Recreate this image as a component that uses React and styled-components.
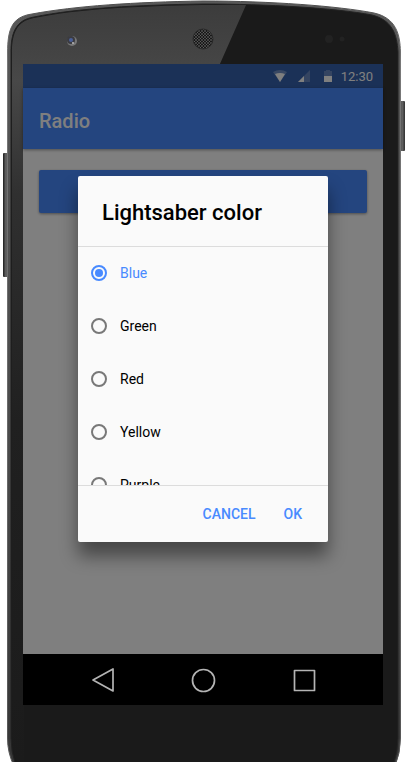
import React, { useState } from 'react';
import styled, { createGlobalStyle } from 'styled-components';

const GlobalStyle = createGlobalStyle`
  * { box-sizing: border-box; }
  body {
    margin: 0;
    background: #ffffff;
    font-family: Roboto, "Noto Sans", sans-serif;
  }
`;

const Phone = styled.div`
  position: relative;
  isolation: isolate;
  display: flex;
  flex-direction: column;
  min-height: 100vh;
  padding: 64px 23px 57px;
  overflow: hidden;
`;

const ShellDrawing = styled.svg`
  position: absolute;
  inset: 0;
  z-index: -1;
  width: 100%;
  height: 100%;
`;

const Screen = styled.div`
  position: relative;
  flex: 1;
  display: flex;
  flex-direction: column;
  background: #ffffff;
`;

const StatusBar = styled.div`
  display: flex;
  align-items: center;
  justify-content: flex-end;
  gap: 10px;
  height: 24px;
  padding-right: 10px;
  background: #3662ae;
  color: #ffffff;
`;

const StatusIcon = styled.svg`
  width: 14px;
  height: 14px;
  fill: #ffffff;
`;

const Clock = styled.time`
  margin-left: -4px;
  padding-top: 1px;
  font-size: 13px;
  line-height: 24px;
`;

const Toolbar = styled.header`
  display: flex;
  align-items: center;
  height: 61px;
  padding: 4px 16px 0;
  background: #488aff;
  box-shadow: 0 1px 3px rgba(0, 0, 0, 0.4);
`;

const PageTitle = styled.h1`
  margin: 0;
  font-size: 20px;
  font-weight: 500;
  line-height: 24px;
  color: #ffffff;
`;

const Content = styled.main`
  flex: 1;
  padding: 21px 16px;
`;

const OpenButton = styled.button`
  display: block;
  width: 100%;
  height: 43px;
  border: 0;
  border-radius: 2px;
  background: #488aff;
  box-shadow: 0 1px 3px rgba(0, 0, 0, 0.4);
`;

const Scrim = styled.div`
  position: absolute;
  inset: 0;
  display: flex;
  align-items: center;
  justify-content: center;
  background: rgba(0, 0, 0, 0.5);
`;

const Dialog = styled.form`
  display: flex;
  flex-direction: column;
  width: 250px;
  max-width: 100%;
  border-radius: 2px;
  background: #fafafa;
  box-shadow: 0 14px 18px rgba(0, 0, 0, 0.45);
`;

const DialogTitle = styled.h2`
  margin: 0;
  padding: 23px 24px 19px;
  font-size: 22px;
  font-weight: 500;
  line-height: 28px;
  color: #000000;
`;

const Options = styled.div`
  height: 240px;
  overflow: hidden;
  border-top: 1px solid #dcdcdc;
  border-bottom: 1px solid #dcdcdc;
`;

const Option = styled.label`
  display: flex;
  align-items: center;
  gap: 13px;
  height: 53px;
  padding: 0 13px 1px;
  font-size: 14px;
  line-height: 20px;
  color: ${({ $selected }) => ($selected ? '#488aff' : '#000000')};
`;

const Radio = styled.input`
  appearance: none;
  display: grid;
  place-items: center;
  flex: none;
  width: 16px;
  height: 16px;
  margin: 0;
  border: 2px solid #787878;
  border-radius: 50%;

  &:checked {
    border-color: #488aff;
  }

  &:checked::before {
    content: "";
    width: 8px;
    height: 8px;
    border-radius: 50%;
    background: #488aff;
  }
`;

const Actions = styled.div`
  display: flex;
  justify-content: flex-end;
  gap: 8px;
  padding: 10px 16px;
`;

const ActionButton = styled.button`
  height: 36px;
  padding: 0 10px;
  border: 0;
  background: transparent;
  font-family: inherit;
  font-size: 14px;
  font-weight: 500;
  line-height: 36px;
  color: #488aff;
`;

const NavBar = styled.nav`
  display: flex;
  align-items: center;
  justify-content: center;
  gap: 73px;
  height: 51px;
  background: #000000;
`;

const NavButton = styled.button`
  width: 28px;
  height: 28px;
  padding: 0;
  border: 0;
  background: transparent;

  svg {
    display: block;
    fill: none;
    stroke: #b4b4b4;
    stroke-width: 1.7;
    stroke-linejoin: round;
  }
`;

const BODY =
  'M7.500 52 C8 32 10 17 32 14 C75 6 135 2 203 1 C270 1 338 6 374 13 C396 18 400 34 400.500 52 L400.500 738 Q400.500 753 395 766 L14 766 Q7.500 753 7.500 738 Z';
const FACE =
  'M11 52 C11 34 15 20 34 17 C78 8 138 5 203 4 C268 4 335 8 372 15 C392 20 397 34 398 52 L398 738 Q398 752 393 766 L16 766 Q11 752 11 738 Z';

function Shell() {
  return (
    <ShellDrawing viewBox="0 0 406 762" preserveAspectRatio="none" aria-hidden="true">
      <defs>
        <linearGradient id="gloss" x1="0" y1="0" x2="0" y2="1">
          <stop offset="0" stopColor="#3c3c3c" />
          <stop offset="0.1" stopColor="#484848" />
          <stop offset="0.25" stopColor="#303030" />
          <stop offset="0.55" stopColor="#202020" />
          <stop offset="1" stopColor="#1b1b1b" />
        </linearGradient>
        <linearGradient id="key" x1="0" y1="0" x2="1" y2="0">
          <stop offset="0" stopColor="#1c1c1c" />
          <stop offset="0.5" stopColor="#686868" />
          <stop offset="1" stopColor="#303030" />
        </linearGradient>
        <linearGradient id="rim" x1="0" y1="0" x2="0" y2="1">
          <stop offset="0" stopColor="#585858" />
          <stop offset="0.6" stopColor="#4a4a4a" />
          <stop offset="1" stopColor="#363636" />
        </linearGradient>
        <linearGradient id="rimEdge" x1="0" y1="0" x2="0" y2="1">
          <stop offset="0" stopColor="#4c4c4c" />
          <stop offset="0.08" stopColor="#787878" />
          <stop offset="0.6" stopColor="#686868" />
          <stop offset="1" stopColor="#555555" />
        </linearGradient>
        <pattern id="mesh" width="3" height="3" patternUnits="userSpaceOnUse">
          <rect width="3" height="3" fill="#171717" />
          <circle cx="1" cy="1" r="0.8" fill="#777777" />
          <circle cx="2.5" cy="2.5" r="0.6" fill="#666666" />
        </pattern>
      </defs>
      <rect x="3" y="153" width="6" height="124" rx="1" fill="url(#key)" />
      <rect x="399" y="101" width="6" height="50" rx="1" fill="url(#key)" />
      <path d={BODY} fill="url(#rim)" stroke="url(#rimEdge)" />
      <path d={FACE} fill="#1a1a1a" stroke="#222222" />
      <path
        d="M12 52 C12 35 16 21 34 18 C78 9 138 6 203 5 L246 5 L219 66 L24 66 L24 762 L17 762 Q12 750 12 738 Z"
        fill="url(#gloss)"
      />
      <circle cx="72" cy="41" r="5" fill="#777777" />
      <circle cx="71" cy="40" r="4" fill="#3b3b40" />
      <circle cx="71" cy="40" r="2" fill="#4a5f98" />
      <circle cx="73" cy="43" r="1" fill="#bbbbbb" />
      <circle cx="203" cy="39" r="10" fill="url(#mesh)" stroke="#2a2a2a" />
      <circle cx="329" cy="39" r="4" fill="#222222" />
      <circle cx="342" cy="39" r="2.5" fill="#222222" />
    </ShellDrawing>
  );
}

const colors = ['Blue', 'Green', 'Red', 'Yellow', 'Purple'];

export default function App() {
  const [selected, setSelected] = useState('Blue');

  return (
    <>
      <GlobalStyle />
      <Phone>
        <Shell />
        <Screen>
          <StatusBar>
            <StatusIcon viewBox="0 0 14 14" aria-hidden="true">
              <path d="M0 3 Q7 -1 14 3 L7 13 Z" opacity="0.3" />
              <path d="M2 5 Q7 3 12 5 L7 13 Z" />
            </StatusIcon>
            <StatusIcon viewBox="0 0 14 14" aria-hidden="true">
              <path d="M13 1 V13 H1 Z" opacity="0.25" />
              <path d="M7 7 V13 H1 Z" />
            </StatusIcon>
            <StatusIcon viewBox="0 0 14 14" aria-hidden="true">
              <path d="M3 2 H5 V1 H9 V2 H11 V7 H3 Z" opacity="0.25" />
              <path d="M3 7 H11 V13 H3 Z" />
            </StatusIcon>
            <Clock>12:30</Clock>
          </StatusBar>
          <Toolbar>
            <PageTitle>Radio</PageTitle>
          </Toolbar>
          <Content>
            <OpenButton type="button" aria-label="Choose color" />
          </Content>
          <Scrim>
            <Dialog role="dialog" aria-labelledby="dialog-title" onSubmit={(e) => e.preventDefault()}>
              <DialogTitle id="dialog-title">Lightsaber color</DialogTitle>
              <Options role="radiogroup" aria-labelledby="dialog-title">
                {colors.map((color) => (
                  <Option key={color} $selected={color === selected}>
                    <Radio
                      type="radio"
                      name="color"
                      value={color}
                      checked={color === selected}
                      onChange={() => setSelected(color)}
                    />
                    {color}
                  </Option>
                ))}
              </Options>
              <Actions>
                <ActionButton type="button">CANCEL</ActionButton>
                <ActionButton type="submit">OK</ActionButton>
              </Actions>
            </Dialog>
          </Scrim>
        </Screen>
        <NavBar aria-label="System">
          <NavButton type="button" aria-label="Back">
            <svg viewBox="0 0 28 28">
              <path d="M25 3 V25 L5 14 Z" />
            </svg>
          </NavButton>
          <NavButton type="button" aria-label="Home">
            <svg viewBox="0 0 28 28">
              <circle cx="14.500" cy="14.500" r="11" />
            </svg>
          </NavButton>
          <NavButton type="button" aria-label="Recent apps">
            <svg viewBox="0 0 28 28">
              <rect x="4.500" y="4.500" width="20" height="20" />
            </svg>
          </NavButton>
        </NavBar>
      </Phone>
    </>
  );
}
